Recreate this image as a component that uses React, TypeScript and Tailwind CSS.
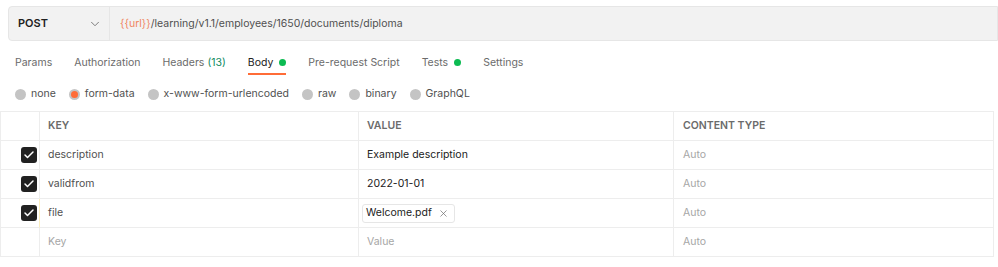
import { ChevronDown, Check, X } from "lucide-react";

const tabs = [
  { name: "Params" },
  { name: "Authorization" },
  { name: "Headers", count: "(13)" },
  { name: "Body", dot: true, active: true },
  { name: "Pre-request Script" },
  { name: "Tests", dot: true },
  { name: "Settings" },
];

const bodyTypes = ["none", "form-data", "x-www-form-urlencoded", "raw", "binary", "GraphQL"];

const rows = [
  { key: "description", value: "Example description" },
  { key: "validfrom", value: "2022-01-01" },
  { key: "file", value: "Welcome.pdf", file: true },
];

export default function App() {
  return (
    <div className="w-[998px] h-[267px] bg-white overflow-hidden font-['Inter',sans-serif] text-[10.5px] text-[#212121]">
      {/* url bar */}
      <div className="pt-[6px] pl-[8px]">
        <div className="flex h-[35px] bg-[#f2f2f2] border border-[#e6e6e6] rounded-l-[4px]">
          <div className="w-[101px] flex items-center justify-between pl-[9px] pr-[7px] border-r border-[#e6e6e6]">
            <span className="font-semibold text-[11px] text-[#212121]">POST</span>
            <ChevronDown size={14} strokeWidth={1.5} className="text-[#6b6b6b]" />
          </div>
          <div className="flex items-center pl-[10px] text-[#505050]">
            <span className="text-[#f0855f]">{"{{url}}"}</span>
            <span>/learning/v1.1/employees/1650/documents/diploma</span>
          </div>
        </div>
      </div>

      {/* tabs */}
      <div className="flex pl-[15px] gap-[22px] mt-[14px] h-[20px]">
        {tabs.map((t) => (
          <div key={t.name} className="relative flex items-start gap-[6px] text-[#6b6b6b]">
            <span className={t.active ? "text-[#212121]" : ""}>
              {t.name}
              {t.count && <span className="text-[#0f8a5f]"> {t.count}</span>}
            </span>
            {t.dot && <span className="mt-[4px] w-[7px] h-[7px] rounded-full bg-[#0cbb52]" />}
            {t.active && <span className="absolute left-0 right-0 bottom-0 h-[2px] bg-[#ff6c37]" />}
          </div>
        ))}
      </div>

      {/* body type radios */}
      <div className="flex items-center pl-[15px] gap-[13px] mt-[11px] h-[16px]">
        {bodyTypes.map((b) => (
          <div key={b} className="flex items-center gap-[5px] text-[#505050]">
            <span className="w-[11px] h-[11px] rounded-full bg-[#c4c4c4] flex items-center justify-center">
              {b === "form-data" && <span className="w-[7px] h-[7px] rounded-full bg-[#ff6c37]" />}
            </span>
            <span>{b}</span>
          </div>
        ))}
      </div>

      {/* table */}
      <div className="mt-[9px] w-[994px] border-t border-l border-r border-[#ededed]">
        <div className="grid grid-cols-[38px_319px_315px_1fr]">
          <div className="h-[29px] border-b border-[#ededed]" />
          <div className="h-[29px] border-b border-l border-[#ededed] flex items-center pl-[8px] font-semibold text-[#6b6b6b]">KEY</div>
          <div className="h-[29px] border-b border-l border-[#ededed] flex items-center pl-[8px] font-semibold text-[#6b6b6b]">VALUE</div>
          <div className="h-[29px] border-b border-l border-[#ededed] flex items-center pl-[9px] font-semibold text-[#6b6b6b]">CONTENT TYPE</div>

          {rows.map((r) => (
            <div key={r.key} className="contents">
              <div className="h-[29px] border-b border-[#ededed] flex items-center justify-end pr-[2px]">
                <span className="w-[16px] h-[16px] rounded-[3px] bg-[#212121] flex items-center justify-center">
                  <Check size={12} strokeWidth={3} className="text-white" />
                </span>
              </div>
              <div className={`h-[29px] border-b border-l flex items-center pl-[8px] text-[#505050] ${r.file ? "border-l-[#fbeec0] border-b-[#ededed]" : "border-[#ededed]"}`}>
                {r.key}
              </div>
              <div className="h-[29px] border-b border-l border-[#ededed] flex items-center pl-[3px]">
                {r.file ? (
                  <span className="flex items-center gap-[6px] h-[19px] pl-[3px] pr-[5px] border border-[#e6e6e6] rounded-[3px] text-[#212121]">
                    {r.value}
                    <X size={11} strokeWidth={1.5} className="text-[#6b6b6b]" />
                  </span>
                ) : (
                  <span className="pl-[5px] text-[#212121]">{r.value}</span>
                )}
              </div>
              <div className="h-[29px] border-b border-l border-[#ededed] flex items-center pl-[9px] text-[#a6a6a6]">Auto</div>
            </div>
          ))}

          <div className="h-[29px] border-b border-[#ededed]" />
          <div className="h-[29px] border-b border-l border-[#ededed] flex items-center pl-[8px] text-[#a6a6a6]">Key</div>
          <div className="h-[29px] border-b border-l border-[#ededed] flex items-center pl-[8px] text-[#a6a6a6]">Value</div>
          <div className="h-[29px] border-b border-l border-[#ededed] flex items-center pl-[9px] text-[#a6a6a6]">Auto</div>
        </div>
      </div>
    </div>
  );
}
